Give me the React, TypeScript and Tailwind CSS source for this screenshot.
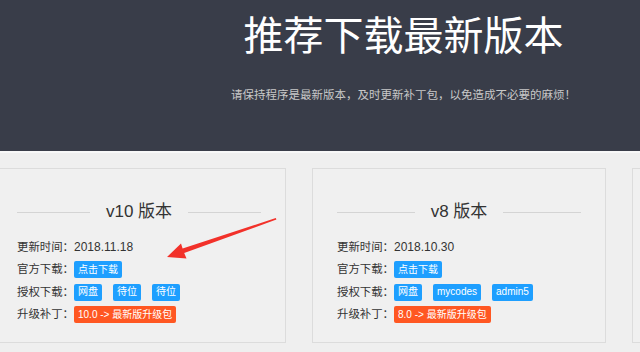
import React from "react";

const FONT = { fontFamily: '"Liberation Sans", "Noto Sans CJK SC", sans-serif' };

type Badge = { text: string; color: "blue" | "red" };

function Tag({ b }: { b: Badge }) {
  return (
    <span
      className={
        "inline-flex h-[17px] items-center rounded-[2px] px-[4px] text-[10px] leading-none text-white whitespace-nowrap " +
        (b.color === "blue" ? "bg-[#1E9FFF]" : "bg-[#FF5722]")
      }
    >
      {b.text}
    </span>
  );
}

function Row({ label, children }: { label: string; children: React.ReactNode }) {
  return (
    <div className="flex h-[22.5px] items-center">
      <div className="w-[57px] shrink-0 whitespace-nowrap text-[11.4px] text-[#333]">{label}：</div>
      <div className="flex items-center gap-[11px]">{children}</div>
    </div>
  );
}

function Card({
  title,
  date,
  auth,
  patch,
}: {
  title: string;
  date: string;
  auth: string[];
  patch: string;
}) {
  return (
    <div className="h-[175px] w-[294px] shrink-0 border border-[#dcdcdc] bg-[#f0f0f0] px-6 pt-[31px]">
      <div className="flex items-center">
        <div className="h-px flex-1 bg-[#d4d4d4]" />
        <div className="mx-4 text-[17px] leading-6 text-[#333] whitespace-nowrap">{title}</div>
        <div className="h-px flex-1 bg-[#d4d4d4]" />
      </div>
      <div className="mt-[12px]">
        <Row label="更新时间">
          <span className="text-[12px] text-[#333]">{date}</span>
        </Row>
        <Row label="官方下载">
          <Tag b={{ text: "点击下载", color: "blue" }} />
        </Row>
        <Row label="授权下载">
          {auth.map((a, i) => (
            <Tag key={i} b={{ text: a, color: "blue" }} />
          ))}
        </Row>
        <Row label="升级补丁">
          <Tag b={{ text: patch, color: "red" }} />
        </Row>
      </div>
    </div>
  );
}

export default function App() {
  return (
    <div className="relative h-[352px] w-[640px] overflow-hidden bg-[#efefef]" style={FONT}>
      <div className="h-[151px] bg-[#393D49] pl-[167px] pt-[14px]">
        <div className="text-center text-[40px] leading-[44px] text-white whitespace-nowrap">推荐下载最新版本</div>
        <div className="mt-[30px] text-center text-[11.5px] leading-[14px] text-[#c8c8c8] whitespace-nowrap">
          请保持程序是最新版本，及时更新补丁包，以免造成不必要的麻烦！
        </div>
      </div>
      <div className="h-[2px] bg-[#f8f8f8]" />
      <div className="ml-[-8px] mt-[15px] flex gap-[26px]">
        <Card title="v10 版本" date="2018.11.18" auth={["网盘", "待位", "待位"]} patch="10.0 -> 最新版升级包" />
        <Card title="v8 版本" date="2018.10.30" auth={["网盘", "mycodes", "admin5"]} patch="8.0 -> 最新版升级包" />
        <div className="h-[175px] w-[294px] shrink-0 border border-[#dcdcdc] bg-[#f0f0f0]" />
      </div>
      <svg className="pointer-events-none absolute left-0 top-0" width="640" height="352" viewBox="0 0 640 352">
        <polygon
          points="167,257 181,243.5 182.6,248.6 275.8,218 276.4,219.6 184.2,253 186.5,258.5"
          fill="#f2312a"
        />
      </svg>
    </div>
  );
}
